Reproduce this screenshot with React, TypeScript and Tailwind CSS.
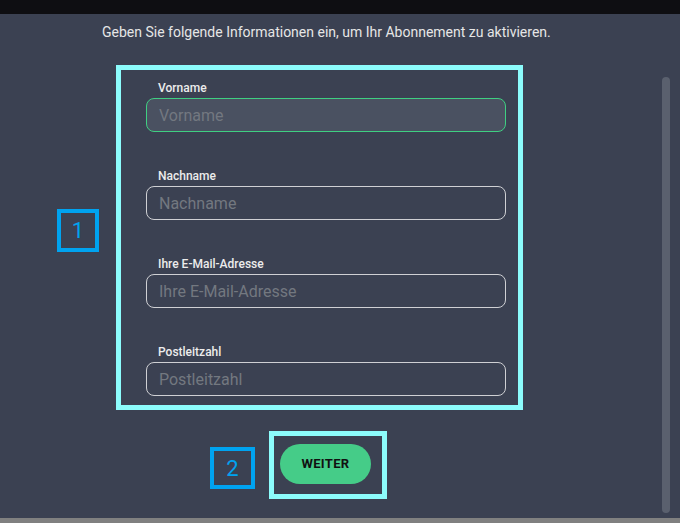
import { useState } from "react";

const fields = [
  { label: "Vorname", name: "firstName" },
  { label: "Nachname", name: "lastName" },
  { label: "Ihre E-Mail-Adresse", name: "email" },
  { label: "Postleitzahl", name: "zip" },
];

export default function App() {
  const [focused] = useState("firstName");

  return (
    <div className="w-[680px] h-[523px] flex flex-col bg-[#3b4152] font-['Roboto',sans-serif] overflow-hidden">
      <div className="h-[14px] bg-[#0e0e12] shrink-0" />

      <div className="relative flex-1 flex flex-col">
        <p className="pt-[9px] pl-[102px] text-[14px] leading-[18px] text-[#e6e6e6]">
          Geben Sie folgende Informationen ein, um Ihr Abonnement zu aktivieren.
        </p>

        {/* annotated form block */}
        <div className="mt-[24px] ml-[116px] w-[407px] h-[345px] border-[5px] border-[#8cfcfc] pl-[25px] pt-[11px] flex flex-col gap-[37px]">
          {fields.map((field) => (
            <div key={field.name} className="flex flex-col gap-[3px]">
              <label className="pl-[12px] text-[12px] leading-[14px] font-medium text-[#ececec]">
                {field.label}
              </label>
              <input
                placeholder={field.label}
                className={`w-[360px] h-[34px] rounded-[8px] px-[12px] text-[16px] text-white placeholder:text-[#737880] outline-none ${
                  focused === field.name
                    ? "bg-[#4a5161] border border-[#3fcf82]"
                    : "bg-transparent border border-[#cfd0d4]"
                }`}
              />
            </div>
          ))}
        </div>

        <div className="mt-[21px] ml-[269px] w-[118px] h-[68px] border-[5px] border-[#8cfcfc] pl-[6px] pt-[8px]">
          <button className="w-[91px] h-[40px] rounded-full bg-[#45cc88] text-[13px] font-bold tracking-wide text-[#111]">
            WEITER
          </button>
        </div>

        {/* step markers */}
        <div className="absolute left-[57px] top-[195px] w-[42px] h-[43px] border-[4px] border-[#00a3f0] flex items-center justify-center text-[22px] font-normal text-[#00a3f0]">
          1
        </div>
        <div className="absolute left-[210px] top-[433px] w-[45px] h-[42px] border-[4px] border-[#00a3f0] flex items-center justify-center text-[22px] font-normal text-[#00a3f0]">
          2
        </div>

        {/* scrollbar */}
        <div className="absolute left-[662px] top-[63px] w-[8px] h-[436px] rounded-full bg-[#5a606e]" />
      </div>

      <div className="h-[5px] bg-[#808080] shrink-0" />
    </div>
  );
}
